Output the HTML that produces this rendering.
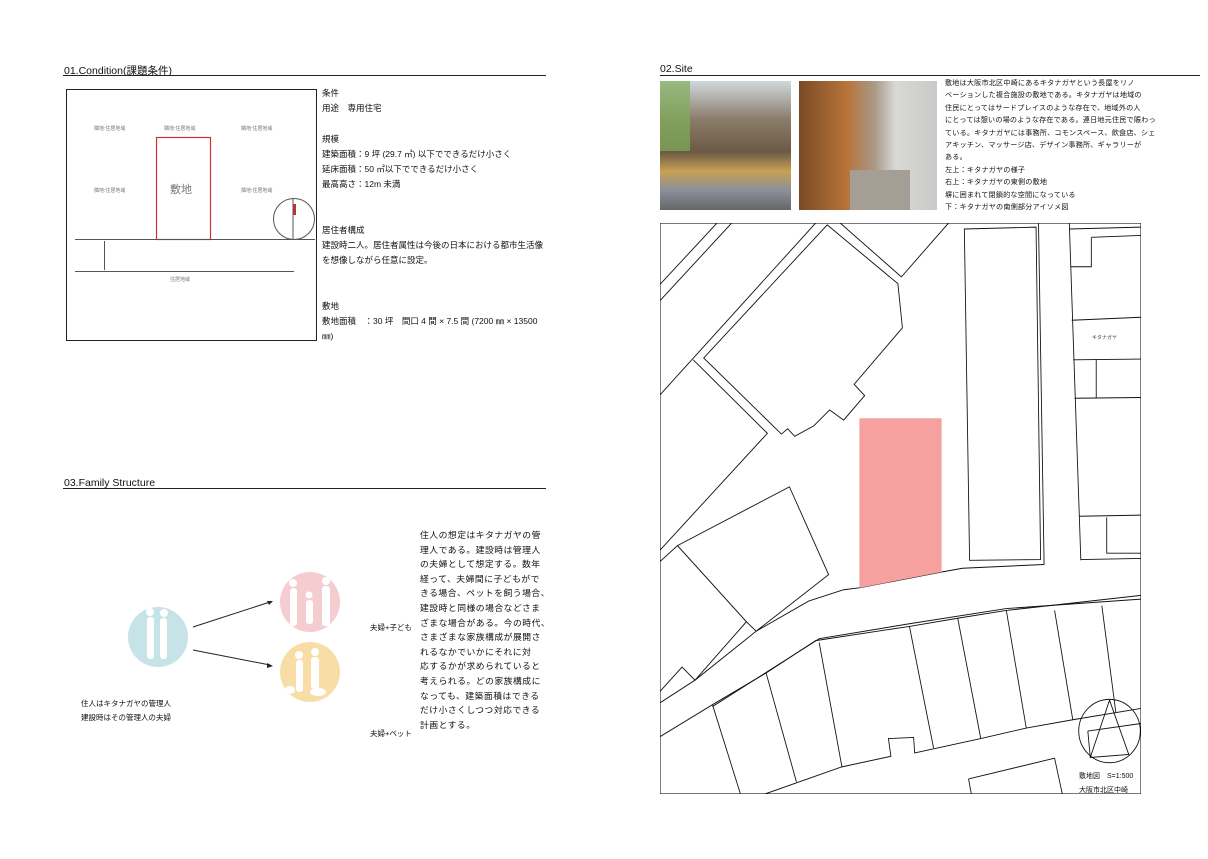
<!DOCTYPE html>
<html><head><meta charset="utf-8"><style>
body{margin:0;width:1208px;height:859px;background:#fff;position:relative;overflow:hidden;font-family:"Liberation Sans","Noto Sans CJK JP",sans-serif;color:#111}
.a{position:absolute;white-space:nowrap}
.h{font-size:10.5px}
.hl{position:absolute;height:1px;background:#222}
.t{font-size:8.5px;line-height:15.2px}
.s{font-size:7.5px;line-height:14.2px}
.s2{font-size:7.1px;line-height:12.4px;letter-spacing:0.2px}
.p{font-size:8.8px;line-height:14.6px;letter-spacing:0.5px}
</style></head><body>
<div class="a h" style="left:64px;top:63px">01.Condition(課題条件)</div>
<div class="hl" style="left:63px;top:75px;width:483px"></div>
<svg class="a" style="left:0;top:0" width="600" height="360">
<rect x="66.5" y="89.5" width="250" height="251" fill="none" stroke="#222"/>
<rect x="156.5" y="137.5" width="54" height="102" fill="none" stroke="#c33" stroke-width="1.2"/>
<line x1="75" y1="239.5" x2="315" y2="239.5" stroke="#555"/>
<line x1="75" y1="271.5" x2="294" y2="271.5" stroke="#555"/>
<line x1="104.5" y1="241" x2="104.5" y2="270" stroke="#555"/>
<circle cx="294" cy="219" r="20.5" fill="none" stroke="#555"/>
<line x1="293" y1="198" x2="293" y2="239" stroke="#555"/>
<rect x="293" y="204" width="3" height="11" fill="#b33"/>
<g font-size="5" fill="#777"><text x="94" y="130">隣地:住居地域</text><text x="164" y="130">隣地:住居地域</text><text x="241" y="130">隣地:住居地域</text><text x="94" y="192">隣地:住居地域</text><text x="241" y="192">隣地:住居地域</text><text x="170" y="281">住居地域</text></g>
<text x="170" y="193" font-size="11" fill="#777">敷地</text>
</svg>
<div class="a t" style="left:322px;top:86px">条件<br>用途　専用住宅<br><br>規模<br>建築面積：9 坪 (29.7 ㎡) 以下でできるだけ小さく<br>延床面積：50 ㎡以下でできるだけ小さく<br>最高高さ：12m 未満<br><br><br>居住者構成<br>建設時二人。居住者属性は今後の日本における都市生活像<br>を想像しながら任意に設定。<br><br><br>敷地<br>敷地面積　：30 坪　間口 4 間 × 7.5 間 (7200 ㎜ × 13500<br>㎜)</div>

<div class="a h" style="left:64px;top:477px">03.Family  Structure</div>
<div class="hl" style="left:63px;top:488px;width:483px"></div>
<svg class="a" style="left:0;top:500px" width="420" height="260">
<circle cx="158" cy="137" r="30" fill="#c6e3e7"/>
<g fill="#fff"><rect x="147" y="117" width="7" height="42" rx="3"/><rect x="160" y="118" width="7" height="41" rx="3"/><circle cx="150" cy="112" r="4"/><circle cx="164" cy="113" r="4"/></g>
<circle cx="310" cy="102" r="30" fill="#f4cdd0"/>
<g fill="#fff"><rect x="290" y="88" width="7" height="38" rx="3"/><rect x="322" y="86" width="8" height="40" rx="3"/><rect x="306" y="100" width="7" height="24" rx="3"/><circle cx="293" cy="83" r="4"/><circle cx="326" cy="81" r="4"/><circle cx="309" cy="95" r="3.5"/></g>
<circle cx="310" cy="172" r="30" fill="#f8dda7"/>
<g fill="#fff"><rect x="296" y="160" width="7" height="32" rx="3"/><rect x="311" y="157" width="8" height="32" rx="3"/><circle cx="299" cy="155" r="4"/><circle cx="315" cy="152" r="4"/><ellipse cx="318" cy="192" rx="8" ry="4"/><ellipse cx="290" cy="190" rx="5" ry="4"/></g>
<line x1="193" y1="127" x2="270" y2="102" stroke="#222"/><path d="M273 101l-6 0 2 4z" fill="#222"/>
<line x1="193" y1="150" x2="270" y2="165" stroke="#222"/><path d="M273 166l-6-3 0 5z" fill="#222"/>
</svg>
<div class="a s" style="left:81px;top:697px">住人はキタナガヤの管理人<br>建設時はその管理人の夫婦</div>
<div class="a s" style="left:370px;top:621px">夫婦+子ども</div>
<div class="a s" style="left:370px;top:727px">夫婦+ペット</div>
<div class="a p" style="left:420px;top:528px">住人の想定はキタナガヤの管<br>理人である。建設時は管理人<br>の夫婦として想定する。数年<br>経って、夫婦間に子どもがで<br>きる場合、ペットを飼う場合、<br>建設時と同様の場合などさま<br>ざまな場合がある。今の時代、<br>さまざまな家族構成が展開さ<br>れるなかでいかにそれに対<br>応するかが求められていると<br>考えられる。どの家族構成に<br>なっても、建築面積はできる<br>だけ小さくしつつ対応できる<br>計画とする。</div>

<div class="a h" style="left:660px;top:63px">02.Site</div>
<div class="hl" style="left:660px;top:75px;width:540px"></div>
<div class="a" style="left:660px;top:81px;width:131px;height:129px;background:linear-gradient(180deg,#cfd8dc 0%,#8a7c6a 30%,#6b5a45 55%,#c8a055 70%,#8a8f9a 85%,#666 100%)"></div>
<div class="a" style="left:660px;top:81px;width:30px;height:70px;background:#7fae5a;opacity:.7"></div>
<div class="a" style="left:799px;top:81px;width:138px;height:129px;background:linear-gradient(90deg,#7a4a25 0%,#b8743a 35%,#a89a88 55%,#d8d8d6 70%,#c9c9c7 100%)"></div>
<div class="a" style="left:850px;top:170px;width:60px;height:40px;background:#a59e94"></div>
<div class="a s2" style="left:945px;top:77px">敷地は大阪市北区中崎にあるキタナガヤという長屋をリノ<br>ベーションした複合施設の敷地である。キタナガヤは地域の<br>住民にとってはサードプレイスのような存在で、地域外の人<br>にとっては憩いの場のような存在である。連日地元住民で賑わっ<br>ている。キタナガヤには事務所、コモンスペース、飲食店、シェ<br>アキッチン、マッサージ店、デザイン事務所、ギャラリーが<br>ある。<br>左上：キタナガヤの様子<br>右上：キタナガヤの東側の敷地<br>塀に囲まれて閉鎖的な空間になっている<br>下：キタナガヤの南側部分アイソメ図</div>

<svg class="a" style="left:660px;top:223px" width="481" height="571" viewBox="15 22 1375 1515" preserveAspectRatio="none">
<g fill="none" stroke="#111" stroke-width="2.5">
<rect x="15" y="22" width="1375" height="1515" stroke-width="3"/>
<path d="M15 185L178 22M15 228L220 22M15 478L460 22"/>
<path d="M140 380L493 27L695 183L708 300L570 450L600 480L540 545L500 518L455 560L400 588L380 568L362 582Z"/>
<path d="M110 385L322 580L15 890"/>
<path d="M530 22L705 165L840 22"/>
<path d="M885 38L1090 33L1103 915L900 917Z"/>
<path d="M1097 22L1113 928"/>
<path d="M1185 22L1218 917M1185 38L1390 33M1248 60L1390 55M1248 60L1248 138L1188 138M1192 280L1390 272M1196 385L1390 383M1262 385L1262 485M1200 487L1390 485M1213 800L1390 797M1292 803L1292 898L1390 898M1218 915L1390 912"/>
<path d="M15 920L65 878L385 722L497 955L290 1105L262 1080L65 878"/>
<path d="M262 1080L115 1235L78 1200L15 1265"/>
<path d="M15 1295L115 1235L290 1105L440 1025L540 995L585 990L820 948L880 938L1113 928"/>
<path d="M15 1385L165 1300L320 1215L460 1130L730 1092L870 1070L1005 1050L1390 1010"/>
<path d="M165 1305L470 1125L730 1085L1005 1045L1390 1020"/>
<path d="M165 1300L245 1537M318 1215L405 1505M470 1135L535 1465M728 1092L797 1415M866 1070L932 1390M1005 1050L1062 1362M1143 1050L1195 1340M1278 1037L1318 1320"/>
<path d="M315 1537L535 1465L675 1437L668 1390L740 1387L743 1428L932 1390L1062 1362L1195 1340L1390 1310"/>
<path d="M897 1497L1143 1442L1165 1537M897 1497L905 1537"/>
<ellipse cx="1300" cy="1370" rx="88" ry="84"/>
<path d="M1300 1288L1245 1440L1355 1432ZM1238 1370L1390 1350M1238 1370L1245 1440"/>
</g>
<path d="M585 540L820 540L820 948L585 990Z" fill="#f6a0a0"/>
</svg>
<div class="a" style="left:1092px;top:334px;font-size:5px;color:#444">キタナガヤ</div>
<div class="a" style="left:1079px;top:770px;font-size:7px;line-height:14px;color:#111">敷地図　S=1:500<br>大阪市北区中崎</div>
</body></html>
